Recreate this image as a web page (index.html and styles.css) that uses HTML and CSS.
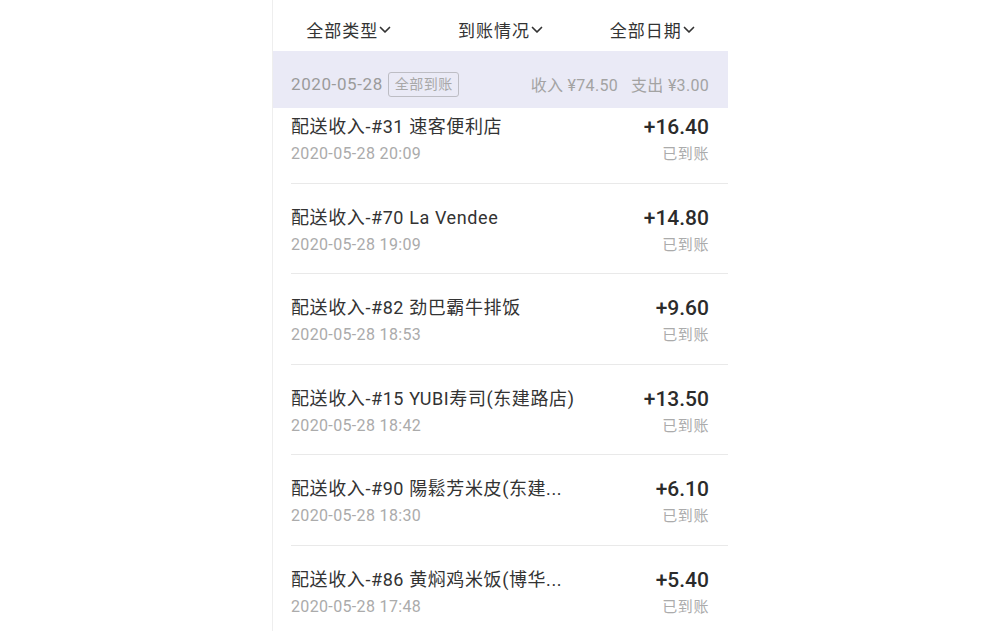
FILE: index.html
```html
<!DOCTYPE html>
<html lang="zh">
<head>
<meta charset="utf-8">
<link rel="stylesheet" href="styles.css">
</head>
<body>
<div class="panel">
  <div class="filters">
    <div class="filter">全部类型<svg class="chev" viewBox="0 0 12 8"><path d="M1.5 1.5 L6 6 L10.5 1.5"/></svg></div>
    <div class="filter">到账情况<svg class="chev" viewBox="0 0 12 8"><path d="M1.5 1.5 L6 6 L10.5 1.5"/></svg></div>
    <div class="filter">全部日期<svg class="chev" viewBox="0 0 12 8"><path d="M1.5 1.5 L6 6 L10.5 1.5"/></svg></div>
  </div>
  <div class="day-bar">
    <div class="day-left">
      <span class="day-date">2020-05-28</span>
      <span class="badge">全部到账</span>
    </div>
    <div class="day-sum">收入 ¥74.50<span class="gap"></span>支出 ¥3.00</div>
  </div>
  <div class="list-wrap">
    <div class="list">
      <div class="row">
        <div class="main"><div class="title">配送收入-#31 速客便利店</div><div class="time">2020-05-28 20:09</div></div>
        <div class="side"><div class="amount">+16.40</div><div class="status">已到账</div></div>
      </div>
      <div class="row">
        <div class="main"><div class="title">配送收入-#70 La Vendee</div><div class="time">2020-05-28 19:09</div></div>
        <div class="side"><div class="amount">+14.80</div><div class="status">已到账</div></div>
      </div>
      <div class="row">
        <div class="main"><div class="title">配送收入-#82 劲巴霸牛排饭</div><div class="time">2020-05-28 18:53</div></div>
        <div class="side"><div class="amount">+9.60</div><div class="status">已到账</div></div>
      </div>
      <div class="row">
        <div class="main"><div class="title">配送收入-#15 YUBI寿司(东建路店)</div><div class="time">2020-05-28 18:42</div></div>
        <div class="side"><div class="amount">+13.50</div><div class="status">已到账</div></div>
      </div>
      <div class="row">
        <div class="main"><div class="title">配送收入-#90 陽鬆芳米皮(东建...</div><div class="time">2020-05-28 18:30</div></div>
        <div class="side"><div class="amount">+6.10</div><div class="status">已到账</div></div>
      </div>
      <div class="row">
        <div class="main"><div class="title">配送收入-#86 黄焖鸡米饭(博华...</div><div class="time">2020-05-28 17:48</div></div>
        <div class="side"><div class="amount">+5.40</div><div class="status">已到账</div></div>
      </div>
    </div>
  </div>
</div>
</body>
</html>
```

FILE: styles.css
```css
* { box-sizing: border-box; }
html, body {
  margin: 0;
  padding: 0;
  background: #fff;
  height: 100%;
  overflow: hidden;
}
body {
  font-family: Roboto, "Noto Sans CJK SC", sans-serif;
  display: flex;
  justify-content: center;
}
.panel {
  width: 456px;
  height: 631px;
  border-left: 1px solid #eeeeee;
  display: flex;
  flex-direction: column;
  overflow: hidden;
}
.filters {
  height: 51px;
  display: flex;
  flex: none;
  padding-top: 8px;
}
.filter {
  flex: 1;
  display: flex;
  align-items: center;
  justify-content: center;
  font-size: 17px;
  letter-spacing: 1px;
  color: #333;
  gap: 1px;
}
.chev {
  width: 12px;
  height: 8px;
  fill: none;
  stroke: #333;
  stroke-width: 1.7;
  stroke-linecap: round;
  stroke-linejoin: round;
  margin-top: 1px;
}
.day-bar {
  height: 57px;
  flex: none;
  background: #eaeaf6;
  display: flex;
  align-items: center;
  justify-content: space-between;
  padding: 8px 19px 0 18px;
  color: #9b9b9b;
}
.day-left {
  display: flex;
  align-items: center;
  gap: 5px;
}
.day-date {
  font-size: 17px;
  letter-spacing: 0.6px;
}
.badge {
  font-size: 14px;
  letter-spacing: 0.5px;
  color: #a8a8a8;
  border: 1px solid #bdbdc4;
  border-radius: 3px;
  padding: 0 5px 0 6px;
  height: 25px;
  line-height: 23px;
  margin-top: 2px;
}
.day-sum {
  font-size: 16px;
  letter-spacing: 0.3px;
  color: #a3a3a3;
}
.gap {
  display: inline-block;
  width: 13px;
}
.list-wrap {
  flex: 1;
  overflow: hidden;
}
.list {
  margin-top: -15px;
}
.row {
  display: flex;
  justify-content: space-between;
  margin-left: 18px;
  padding: 21px 19px 14px 0;
  height: 90.5px;
  border-bottom: 1px solid #e9e9e9;
}
.title {
  font-size: 18px;
  letter-spacing: 0.6px;
  line-height: 26px;
  color: #333;
  white-space: nowrap;
}
.time {
  font-size: 16px;
  letter-spacing: 0.35px;
  line-height: 28px;
  color: #ababab;
}
.side {
  text-align: right;
}
.amount {
  font-size: 21px;
  line-height: 26px;
  font-weight: 500;
  color: #2b2b2b;
}
.status {
  font-size: 15px;
  letter-spacing: 0.6px;
  line-height: 28px;
  color: #ababab;
}
```
